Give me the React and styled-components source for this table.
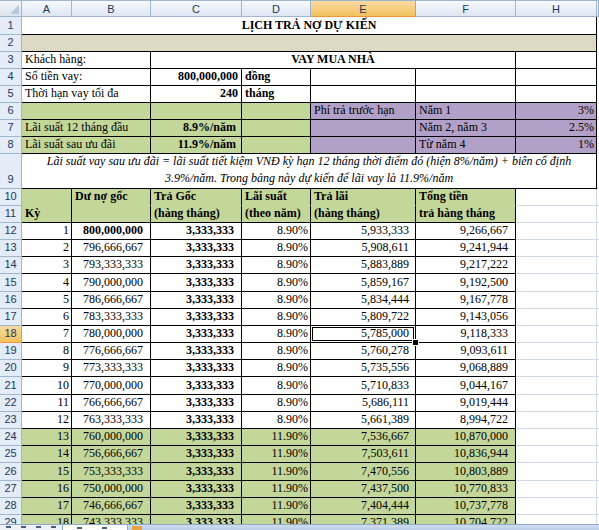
import styled, { createGlobalStyle } from 'styled-components';

const K = '#000';
const GRID = '#d0d7e5';
const GREEN = '#c4d79b';
const TAN = '#ddd9c4';
const PURPLE = '#b1a0c7';

// header row + rows 1..29
const ROW_HEIGHTS = [17, 18, 17, 17, 17, 17, 17, 17, 17, 35, 17, 17, 17, 17, 17, 18, 17, 17, 17, 17, 17, 18, 17, 17, 17, 17, 18, 17, 17, 17];
const COL_LETTERS = ['A', 'B', 'C', 'D', 'E', 'F', 'H'];

const GlobalStyle = createGlobalStyle`
  html, body {
    margin: 0;
    padding: 0;
    background: #fff;
    overflow: hidden;
  }
  body {
    font-family: "Liberation Serif", "Times New Roman", serif;
  }
`;

const Window = styled.div`
  width: 599px;
  height: 530px;
  display: flex;
  flex-direction: column;
  overflow: hidden;
`;

const SheetArea = styled.div`
  height: 524px;
  overflow: hidden;
`;

const Sheet = styled.div`
  display: grid;
  grid-template-columns: 22px 50px 79px 91px 69px 105px 100px 81px 1fr;
  grid-template-rows: ${ROW_HEIGHTS.map((h) => `${h}px`).join(' ')};
`;

const Corner = styled.div`
  box-sizing: border-box;
  position: relative;
  background: linear-gradient(#f3f6fb, #dbe4f0);
  border-right: 1px solid #9eb6ce;
  border-bottom: 1px solid #9eb6ce;
  border-top: 1px solid #9eb6ce;

  &::after {
    content: '';
    position: absolute;
    right: 2px;
    bottom: 2px;
    border-left: 9px solid transparent;
    border-bottom: 9px solid #b8c7da;
  }
`;

const ColHead = styled.div`
  box-sizing: border-box;
  display: flex;
  align-items: center;
  justify-content: center;
  font-family: "Liberation Sans", Arial, sans-serif;
  font-size: 11px;
  color: #1e395b;
  background: ${(p) => (p.$sel ? 'linear-gradient(#f9dba3, #f1c15f)' : 'linear-gradient(#f7f9fc, #dde6f2)')};
  border-top: 1px solid #9eb6ce;
  border-right: 1px solid ${(p) => (p.$sel ? '#f29536' : '#9eb6ce')};
  border-bottom: 1px solid ${(p) => (p.$sel ? '#f29536' : '#9eb6ce')};
`;

const RowHead = styled.div`
  box-sizing: border-box;
  display: flex;
  align-items: flex-end;
  justify-content: center;
  padding-bottom: 2px;
  font-family: "Liberation Sans", Arial, sans-serif;
  font-size: 11px;
  line-height: 13px;
  color: #1e395b;
  background: ${(p) => (p.$sel ? 'linear-gradient(#f9dba3, #f1c15f)' : '#e4ecf7')};
  border-right: 1px solid ${(p) => (p.$sel ? '#f29536' : '#9eb6ce')};
  border-bottom: 1px solid ${(p) => (p.$sel ? '#f29536' : '#9eb6ce')};
`;

const Cell = styled.div`
  grid-column: span ${(p) => p.$span || 1};
  grid-row: span ${(p) => p.$rows || 1};
  box-sizing: border-box;
  position: relative;
  display: flex;
  align-items: flex-end;
  justify-content: ${(p) => (p.$align === 'right' ? 'flex-end' : p.$align === 'center' ? 'center' : 'flex-start')};
  padding: 0 ${(p) => p.$pr ?? 3}px 1px 3px;
  background: ${(p) => p.$bg || '#fff'};
  border-right: 1px solid ${(p) => p.$r || GRID};
  border-bottom: 1px solid ${(p) => p.$b || GRID};
  font-size: 12px;
  line-height: 15px;
  font-weight: ${(p) => (p.$bold ? 700 : 400)};
  font-style: ${(p) => (p.$italic ? 'italic' : 'normal')};
  color: #000;
  white-space: nowrap;
  overflow: ${(p) => (p.$active ? 'visible' : 'hidden')};
  z-index: ${(p) => (p.$active ? 2 : 'auto')};
`;

const Note = styled.span`
  white-space: normal;
  text-align: center;
  line-height: 17px;
`;

const Edge = styled.div`
  box-sizing: border-box;
  background: #fff;
  border-bottom: 1px solid ${GRID};
`;

const Selection = styled.div`
  position: absolute;
  left: -1px;
  top: -1px;
  right: -1px;
  bottom: -1px;
  border: 1px solid #000;
  box-shadow: inset 0 0 0 1px #fff, inset 0 0 0 2px #000;
  pointer-events: none;
`;

const FillHandle = styled.div`
  position: absolute;
  right: -4px;
  bottom: -4px;
  width: 5px;
  height: 5px;
  background: #000;
  border: 1px solid #fff;
`;

const TabBar = styled.div`
  flex: 1;
  display: flex;
  align-items: flex-start;
  background: linear-gradient(#cfdcef, #bccfe8);
  border-top: 1px solid #8ea9cc;
`;

const TabNav = styled.div`
  width: 62px;
  height: 100%;
  display: flex;
  gap: 10px;
  padding: 1px 0 0 6px;
  box-sizing: border-box;
  background: #eef2f8;
`;

const NavMark = styled.span`
  width: 5px;
  height: 2px;
  background: #4a5f7d;
`;

const SheetTab = styled.div`
  width: 66px;
  height: 100%;
  background: #fff;
  border-left: 1px solid #8ea9cc;
  border-right: 1px solid #8ea9cc;
  display: flex;
  gap: 20px;
  padding: 2px 0 0 14px;
  box-sizing: border-box;
`;

const InsertTab = styled.div`
  width: 10px;
  height: 4px;
  margin: 1px 0 0 4px;
  background: #e9a441;
`;

const money = (n) => Math.round(n).toLocaleString('en-US');

const PRINCIPAL = 800000000;
const MONTHS = 240;
const schedule = Array.from({ length: 18 }, (_, i) => {
  const k = i + 1;
  const balance = PRINCIPAL - (i * PRINCIPAL) / MONTHS;
  const rate = k <= 12 ? 0.089 : 0.119;
  const principalPay = PRINCIPAL / MONTHS;
  const interest = (balance * rate) / 12;
  return {
    k,
    balance: money(balance),
    principalPay: money(principalPay),
    rate: `${(rate * 100).toFixed(2)}%`,
    interest: money(interest),
    total: money(principalPay + interest),
  };
});

const App = () => {
  return (
    <Window>
      <GlobalStyle />
      <SheetArea>
        <Sheet>
          <Corner />
          {COL_LETTERS.map((c) => (
            <ColHead key={c} $sel={c === 'E'}>{c}</ColHead>
          ))}
          <ColHead />

          {/* row 1 */}
          <RowHead>1</RowHead>
          <Cell $span={7} $align="center" $bold $r={K} $b={K}>LỊCH TRẢ NỢ DỰ KIẾN</Cell>
          <Edge />

          {/* row 2 */}
          <RowHead>2</RowHead>
          <Cell $span={7} $bg={TAN} $r={K} $b={K} />
          <Edge />

          {/* row 3 */}
          <RowHead>3</RowHead>
          <Cell $span={2} $r={K} $b={K}>Khách hàng:</Cell>
          <Cell $span={4} $align="center" $bold $r={K} $b={K}>VAY MUA NHÀ</Cell>
          <Cell $r={K} $b={K} />
          <Edge />

          {/* row 4 */}
          <RowHead>4</RowHead>
          <Cell $span={2} $r={K} $b={K}>Số tiền vay:</Cell>
          <Cell $align="right" $bold $pr={3} $r={K} $b={K}>800,000,000</Cell>
          <Cell $bold $r={K} $b={K}>đồng</Cell>
          <Cell $r={K} $b={K} />
          <Cell $r={K} $b={K} />
          <Cell $r={K} $b={K} />
          <Edge />

          {/* row 5 */}
          <RowHead>5</RowHead>
          <Cell $span={2} $r={K} $b={K}>Thời hạn vay tối đa</Cell>
          <Cell $align="right" $bold $pr={3} $r={K} $b={K}>240</Cell>
          <Cell $bold $r={K} $b={K}>tháng</Cell>
          <Cell $r={K} $b={K} />
          <Cell $r={K} $b={K} />
          <Cell $r={K} $b={K} />
          <Edge />

          {/* row 6 */}
          <RowHead>6</RowHead>
          <Cell $span={2} $bg={GREEN} $r={K} $b={K} />
          <Cell $bg={GREEN} $r={K} $b={K} />
          <Cell $bg={GREEN} $r={K} $b={K} />
          <Cell $bg={PURPLE} $r={K} $b={K}>Phí trả trước hạn</Cell>
          <Cell $bg={PURPLE} $r={K} $b={K}>Năm 1</Cell>
          <Cell $bg={PURPLE} $align="right" $pr={2} $r={K} $b={K}>3%</Cell>
          <Edge />

          {/* row 7 */}
          <RowHead>7</RowHead>
          <Cell $span={2} $bg={GREEN} $r={K} $b={K}>Lãi suất 12 tháng đầu</Cell>
          <Cell $bg={GREEN} $align="right" $bold $pr={5} $r={K} $b={K}>8.9%/năm</Cell>
          <Cell $bg={GREEN} $r={K} $b={K} />
          <Cell $bg={PURPLE} $r={K} $b={K} />
          <Cell $bg={PURPLE} $r={K} $b={K}>Năm 2, năm 3</Cell>
          <Cell $bg={PURPLE} $align="right" $pr={2} $r={K} $b={K}>2.5%</Cell>
          <Edge />

          {/* row 8 */}
          <RowHead>8</RowHead>
          <Cell $span={2} $bg={GREEN} $r={K} $b={K}>Lãi suất sau ưu đãi</Cell>
          <Cell $bg={GREEN} $align="right" $bold $pr={5} $r={K} $b={K}>11.9%/năm</Cell>
          <Cell $bg={GREEN} $r={K} $b={K} />
          <Cell $bg={PURPLE} $r={K} $b={K} />
          <Cell $bg={PURPLE} $r={K} $b={K}>Từ năm 4</Cell>
          <Cell $bg={PURPLE} $align="right" $pr={2} $r={K} $b={K}>1%</Cell>
          <Edge />

          {/* row 9 */}
          <RowHead>9</RowHead>
          <Cell $span={7} $align="center" $italic $r={K} $b={K}>
            <Note>
              Lãi suất vay sau ưu đãi = lãi suất tiết kiệm VNĐ kỳ hạn 12 tháng thời điểm đó (hiện 8%/năm) + biên cố định
              <br />
              3.9%/năm. Trong bảng này dự kiến để lãi vay là 11.9%/năm
            </Note>
          </Cell>
          <Edge />

          {/* rows 10-11 */}
          <RowHead>10</RowHead>
          <Cell $rows={2} $bg={GREEN} $bold $r={K} $b={K}>Kỳ</Cell>
          <Cell $bg={GREEN} $bold $r={K} $b={GREEN}>Dư nợ gốc</Cell>
          <Cell $bg={GREEN} $bold $r={K} $b={GREEN}>Trả Gốc</Cell>
          <Cell $bg={GREEN} $bold $r={K} $b={GREEN}>Lãi suất</Cell>
          <Cell $bg={GREEN} $bold $r={K} $b={GREEN}>Trả lãi</Cell>
          <Cell $bg={GREEN} $bold $r={K} $b={GREEN}>Tổng tiền</Cell>
          <Cell />
          <Edge />

          <RowHead>11</RowHead>
          <Cell $bg={GREEN} $bold $r={K} $b={K} />
          <Cell $bg={GREEN} $bold $r={K} $b={K}>(hàng tháng)</Cell>
          <Cell $bg={GREEN} $bold $r={K} $b={K}>(theo năm)</Cell>
          <Cell $bg={GREEN} $bold $r={K} $b={K}>(hàng tháng)</Cell>
          <Cell $bg={GREEN} $bold $r={K} $b={K}>trả hàng tháng</Cell>
          <Cell />
          <Edge />

          {schedule.map((row) => {
            const rowNo = row.k + 11;
            const bg = row.k > 12 ? GREEN : '#fff';
            return [
              <RowHead key={`h${rowNo}`} $sel={rowNo === 18}>{rowNo}</RowHead>,
              <Cell key={`a${rowNo}`} $bg={bg} $align="right" $pr={2} $r={K} $b={K}>{row.k}</Cell>,
              <Cell key={`b${rowNo}`} $bg={bg} $align="right" $pr={7} $bold={row.k === 1} $r={K} $b={K}>{row.balance}</Cell>,
              <Cell key={`c${rowNo}`} $bg={bg} $align="right" $pr={7} $bold $r={K} $b={K}>{row.principalPay}</Cell>,
              <Cell key={`d${rowNo}`} $bg={bg} $align="right" $pr={2} $r={K} $b={K}>{row.rate}</Cell>,
              <Cell key={`e${rowNo}`} $bg={bg} $align="right" $pr={6} $r={K} $b={K} $active={rowNo === 18}>
                {row.interest}
                {rowNo === 18 && (
                  <>
                    <Selection />
                    <FillHandle />
                  </>
                )}
              </Cell>,
              <Cell key={`f${rowNo}`} $bg={bg} $align="right" $pr={7} $r={K} $b={K}>{row.total}</Cell>,
              <Cell key={`g${rowNo}`} />,
              <Edge key={`x${rowNo}`} />,
            ];
          })}
        </Sheet>
      </SheetArea>
      <TabBar>
        <TabNav>
          <NavMark />
          <NavMark />
          <NavMark />
          <NavMark />
        </TabNav>
        <SheetTab>
          <NavMark />
          <NavMark />
        </SheetTab>
        <InsertTab />
      </TabBar>
    </Window>
  );
};

export default App;
